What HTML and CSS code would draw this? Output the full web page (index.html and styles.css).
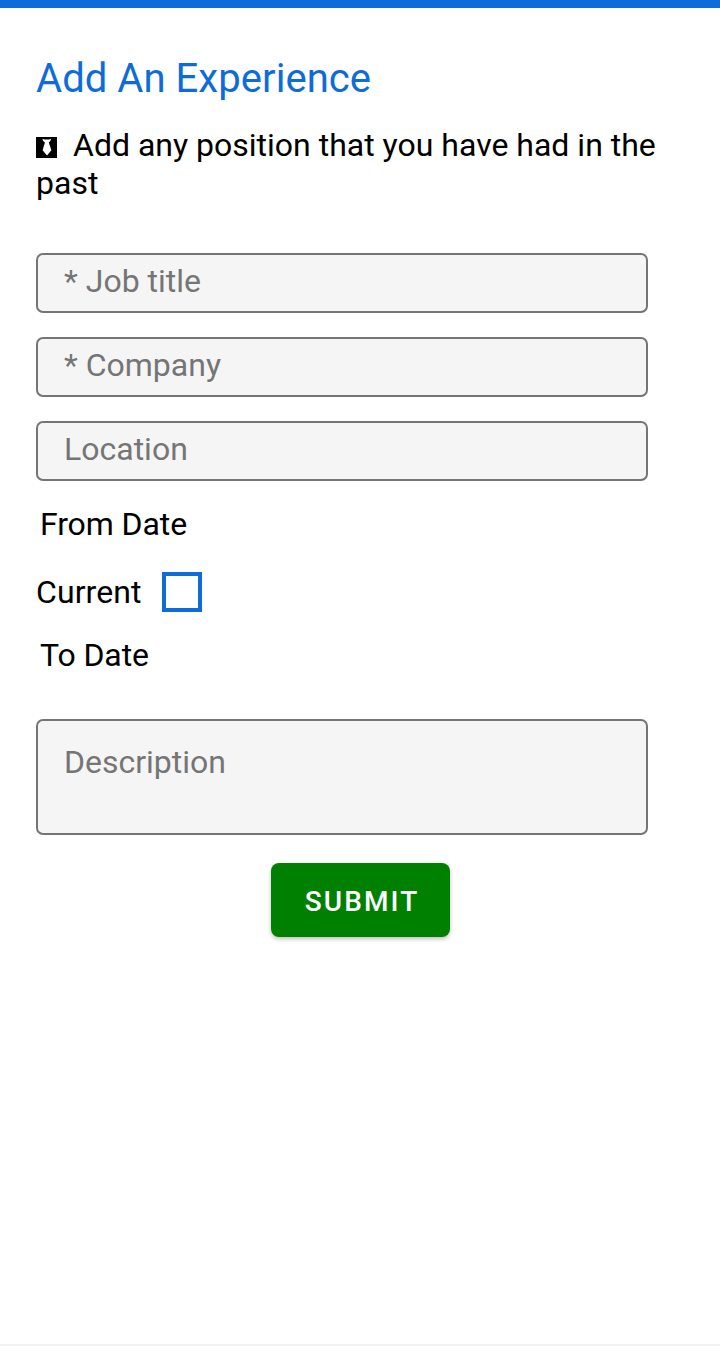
FILE: index.html
```html
<!DOCTYPE html>
<html lang="en">
<head>
<meta charset="utf-8">
<title>Add An Experience</title>
<link rel="stylesheet" href="styles.css">
</head>
<body>
<main class="page">
  <h1 class="title">Add An Experience</h1>
  <p class="intro"><svg class="tie" viewBox="0 0 21 21"><path fill="#000" d="M0 0h21v21H0z"/><path fill="#fff" d="M6.500 1.800l2 .7h4.500l2-.7-.5 2-1.700 1.700 2.600 7.700-4.400 5.300-4.400-5.300 2.300-7.700L7 3.800z"/></svg>Add any position that you have had in the past</p>
  <form class="form">
    <input class="field" placeholder="* Job title">
    <input class="field" placeholder="* Company">
    <input class="field" placeholder="Location">
    <div class="label">From Date</div>
    <label class="current">Current<input class="check" type="checkbox"></label>
    <div class="label">To Date</div>
    <textarea class="field area" placeholder="Description"></textarea>
    <button class="submit" type="button">SUBMIT</button>
  </form>
</main>
</body>
</html>
```
FILE: styles.css
```css
* { box-sizing: border-box; }
body { margin: 0; background: #fff; color: #000; font-family: Roboto, sans-serif; font-size: 32px; }
.page { height: 1346px; border-top: 8px solid #0d6cda; border-bottom: 2px solid #f2f2f2; padding: 47px 36px 0; }
.title { margin: 0; font-size: 40px; font-weight: 400; line-height: 48px; color: #0d6cda; letter-spacing: .05px; }
.intro { margin: 23px 0 0; line-height: 38px; }
.tie { width: 21px; height: 21px; margin-right: 16px; vertical-align: -2px; }
.form { display: flex; flex-direction: column; margin-top: 51px; }
.field { width: 612px; height: 60px; margin: 0 0 24px; padding: 0 26px 4px; border: 2px solid #757575; border-radius: 7px; background: #f5f5f5; font: inherit; resize: none; overflow: hidden; }
.field::placeholder { color: #757575; }
.label { padding-left: 4px; line-height: 38px; letter-spacing: -.1px; }
.current { display: flex; align-items: center; height: 40px; margin: 29px 0 24px; letter-spacing: .1px; }
.check { appearance: none; width: 40px; height: 40px; margin: 0 0 0 20.5px; border: 4px solid #0d6cda; }
.area { height: 116px; margin: 45px 0 28px; padding: 22px 26px; }
.submit { align-self: center; width: 179px; height: 74px; margin-left: 1px; padding: 2px 0 0 3px; border: 0; border-radius: 8px; background: green; color: #fff; font: 500 28px Roboto, sans-serif; letter-spacing: 2.1px; box-shadow: 0 2px 4px rgba(0,0,0,.25); }
```
